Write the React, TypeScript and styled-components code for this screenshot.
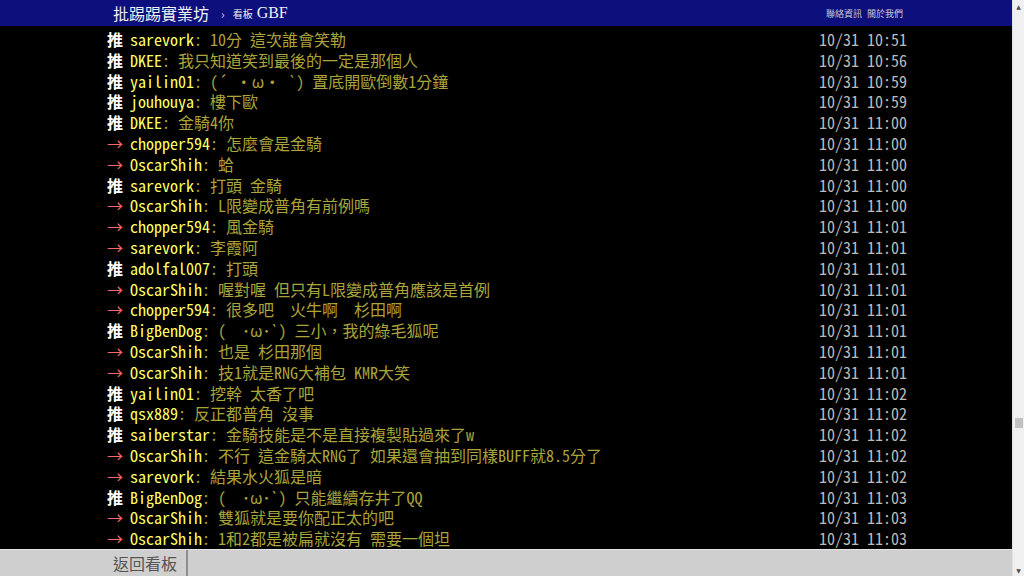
import React, { FC } from 'react';
import styled, { createGlobalStyle } from 'styled-components';

// @ data
type Push = { tag: '推' | '→'; user: string; text: string; time: string };

const pushes: Push[] = [
  { tag: '推', user: 'sarevork', text: '10分 這次誰會笑勒', time: '10/31 10:51' },
  { tag: '推', user: 'DKEE', text: '我只知道笑到最後的一定是那個人', time: '10/31 10:56' },
  { tag: '推', user: 'yailin01', text: '(´ ・ω・ `) 置底開歐倒數1分鐘', time: '10/31 10:59' },
  { tag: '推', user: 'jouhouya', text: '樓下歐', time: '10/31 10:59' },
  { tag: '推', user: 'DKEE', text: '金騎4你', time: '10/31 11:00' },
  { tag: '→', user: 'chopper594', text: '怎麼會是金騎', time: '10/31 11:00' },
  { tag: '→', user: 'OscarShih', text: '蛤', time: '10/31 11:00' },
  { tag: '推', user: 'sarevork', text: '打頭 金騎', time: '10/31 11:00' },
  { tag: '→', user: 'OscarShih', text: 'L限變成普角有前例嗎', time: '10/31 11:00' },
  { tag: '→', user: 'chopper594', text: '風金騎', time: '10/31 11:01' },
  { tag: '→', user: 'sarevork', text: '李霞阿', time: '10/31 11:01' },
  { tag: '推', user: 'adolfal007', text: '打頭', time: '10/31 11:01' },
  { tag: '→', user: 'OscarShih', text: '喔對喔 但只有L限變成普角應該是首例', time: '10/31 11:01' },
  { tag: '→', user: 'chopper594', text: '很多吧  火牛啊  杉田啊', time: '10/31 11:01' },
  { tag: '推', user: 'BigBenDog', text: '(  ･ω･`) 三小，我的綠毛狐呢', time: '10/31 11:01' },
  { tag: '→', user: 'OscarShih', text: '也是 杉田那個', time: '10/31 11:01' },
  { tag: '→', user: 'OscarShih', text: '技1就是RNG大補包 KMR大笑', time: '10/31 11:01' },
  { tag: '推', user: 'yailin01', text: '挖幹 太香了吧', time: '10/31 11:02' },
  { tag: '推', user: 'qsx889', text: '反正都普角 沒事', time: '10/31 11:02' },
  { tag: '推', user: 'saiberstar', text: '金騎技能是不是直接複製貼過來了w', time: '10/31 11:02' },
  { tag: '→', user: 'OscarShih', text: '不行 這金騎太RNG了 如果還會抽到同樣BUFF就8.5分了', time: '10/31 11:02' },
  { tag: '→', user: 'sarevork', text: '結果水火狐是暗', time: '10/31 11:02' },
  { tag: '推', user: 'BigBenDog', text: '(  ･ω･`) 只能繼續存井了QQ', time: '10/31 11:03' },
  { tag: '→', user: 'OscarShih', text: '雙狐就是要你配正太的吧', time: '10/31 11:03' },
  { tag: '→', user: 'OscarShih', text: '1和2都是被扁就沒有 需要一個坦', time: '10/31 11:03' },
];

// @ App
const App: FC = () => (
  <>
    <GlobalStyle />
    <Window>
      <Page>
        <Topbar>
          <Inner>
            <Brand>批踢踢實業坊</Brand>
            <Crumb>›</Crumb>
            <BoardLabel>看板</BoardLabel>
            <BoardName>GBF</BoardName>
            <TopLinks>
              <span>聯絡資訊</span>
              <span>關於我們</span>
            </TopLinks>
          </Inner>
        </Topbar>
        <Main>
          <Inner>
            <PushList>
              {pushes.map((p, i) => (
                <PushRow key={i}>
                  <Tag isPush={p.tag === '推'}>{p.tag}</Tag>
                  <UserId>{p.user}</UserId>
                  <Content>: {p.text}</Content>
                  <Time>{p.time}</Time>
                </PushRow>
              ))}
            </PushList>
          </Inner>
        </Main>
        <BottomBar>
          <Inner>
            <BackButton>返回看板</BackButton>
          </Inner>
        </BottomBar>
      </Page>
      <Scrollbar>
        <Arrow>▲</Arrow>
        <Track>
          <Thumb />
        </Track>
        <Arrow>▼</Arrow>
      </Scrollbar>
    </Window>
  </>
);

// @ styles
const GlobalStyle = createGlobalStyle`
  html, body {
    margin: 0;
    padding: 0;
    background: #000;
    overflow: hidden;
  }
  body {
    font-family: "Noto Sans Mono CJK TC", "Noto Sans CJK TC", "Liberation Mono", monospace;
  }
`;

const Window = styled.div`
  display: flex;
  width: 1024px;
  height: 576px;
`;

const Page = styled.div`
  flex: 1;
  display: flex;
  flex-direction: column;
  min-width: 0;
`;

const Inner = styled.div`
  width: 800px;
  margin: 0 auto;
  display: flex;
  align-items: center;
`;

const Topbar = styled.div`
  height: 26px;
  flex-shrink: 0;
  background: #0c0f7c;
  display: flex;
  align-items: center;
`;

const Brand = styled.span`
  margin-left: 7px;
  font-size: 16px;
  color: #f0f0f0;
  font-family: "Noto Sans CJK TC", serif;
`;

const Crumb = styled.span`
  margin-left: 12px;
  font-size: 12px;
  color: #ccc;
`;

const BoardLabel = styled.span`
  margin-left: 8px;
  font-size: 10px;
  color: #eee;
`;

const BoardName = styled.span`
  margin-left: 4px;
  font-size: 16px;
  color: #f0f0f0;
  font-family: "Liberation Serif", serif;
`;

const TopLinks = styled.span`
  margin-left: auto;
  margin-right: 3px;
  display: flex;
  gap: 5px;
  font-size: 9px;
  color: #c8c8d8;
`;

const Main = styled.div`
  flex: 1;
  overflow: hidden;
  background: #000;
  padding-top: 3px;
`;

const PushList = styled.div`
  width: 100%;
  display: flex;
  flex-direction: column;
`;

const PushRow = styled.div`
  display: flex;
  align-items: center;
  height: 20.8px;
  line-height: 20.8px;
  margin-left: 1px;
  font-size: 16px;
  white-space: pre;
`;

const Tag = styled.span<{ isPush: boolean }>`
  display: inline-block;
  width: 16px;
  margin-right: 7px;
  text-align: center;
  color: ${(props) => (props.isPush ? '#fff' : '#f66')};
  font-weight: ${(props) => (props.isPush ? 700 : 400)};
`;

const UserId = styled.span`
  color: #ff6;
`;

const Content = styled.span`
  flex: 1;
  color: #aba43a;
`;

const Time = styled.span`
  color: #bbb;
  margin-right: -1px;
`;

const BottomBar = styled.div`
  height: 27px;
  flex-shrink: 0;
  background: #cfcfcf;
  border-top: 1px solid #e4e4e4;
  box-sizing: border-box;
  display: flex;
  align-items: stretch;
  & > div {
    align-items: stretch;
  }
`;

const BackButton = styled.div`
  display: flex;
  align-items: center;
  padding: 0 9px 0 7px;
  font-size: 16px;
  color: #555;
  font-family: "Noto Sans CJK TC", sans-serif;
  border-right: 2px solid #8e8e8e;
`;

const Scrollbar = styled.div`
  width: 12px;
  flex-shrink: 0;
  display: flex;
  flex-direction: column;
  background: #f0f0f0;
  border-left: 1px solid #e2e2e2;
  box-sizing: border-box;
`;

const Arrow = styled.div`
  height: 12px;
  display: flex;
  align-items: center;
  justify-content: center;
  font-size: 6px;
  color: #505050;
  font-family: "DejaVu Sans", sans-serif;
`;

const Track = styled.div`
  flex: 1;
  display: flex;
  flex-direction: column;
  align-items: center;
  padding-top: 406px;
`;

const Thumb = styled.div`
  width: 8px;
  height: 10px;
  background: #c1c1c1;
`;

export default App;
